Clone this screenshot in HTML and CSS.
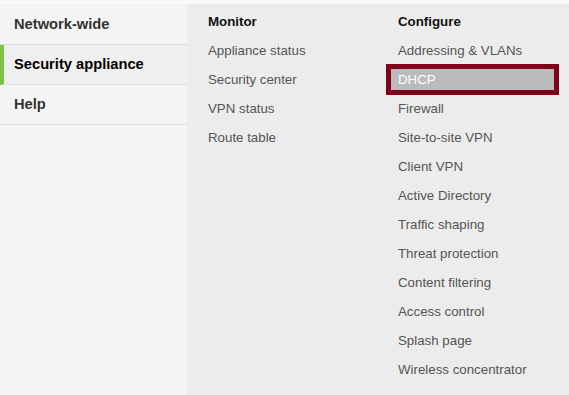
FILE: index.html
```html
<!DOCTYPE html>
<html lang="en">
<head>
    <meta charset="UTF-8">
    <title>Security appliance menu</title>
    <link rel="stylesheet" href="styles.css">
</head>
<body>
    <div class="menu">
        <ul class="sections">
            <li class="section">Network-wide</li>
            <li class="section active">Security appliance</li>
            <li class="section">Help</li>
        </ul>
        <div class="panel">
            <div class="column">
                <h3>Monitor</h3>
                <ul class="links">
                    <li>Appliance status</li>
                    <li>Security center</li>
                    <li>VPN status</li>
                    <li>Route table</li>
                </ul>
            </div>
            <div class="column">
                <h3>Configure</h3>
                <ul class="links">
                    <li>Addressing &amp; VLANs</li>
                    <li class="selected">DHCP</li>
                    <li>Firewall</li>
                    <li>Site-to-site VPN</li>
                    <li>Client VPN</li>
                    <li>Active Directory</li>
                    <li>Traffic shaping</li>
                    <li>Threat protection</li>
                    <li>Content filtering</li>
                    <li>Access control</li>
                    <li>Splash page</li>
                    <li>Wireless concentrator</li>
                </ul>
            </div>
        </div>
    </div>
</body>
</html>
```

FILE: styles.css
```css
body {
    margin: 0;
    font-family: "Liberation Sans", Arial, sans-serif;
    background: #fafafa;
    height: 395px;
    overflow: hidden;
}

.menu {
    display: flex;
    margin-top: 4px;
    margin-right: 1px;
    height: 391px;
}

.sections {
    list-style: none;
    margin: 0;
    padding: 0;
    width: 187px;
    flex-shrink: 0;
    background: #f4f4f4;
}

.section {
    height: 40px;
    line-height: 39px;
    padding-left: 14px;
    font-size: 14.7px;
    font-weight: bold;
    color: #333;
    border-bottom: 1px solid #dcdcdc;
    box-sizing: border-box;
}

.section:first-child {
    height: 41px;
    line-height: 40px;
}

.section.active {
    color: #000;
    background: #efefef;
    border-left: 4px solid #7dc242;
    padding-left: 10px;
}

.panel {
    flex: 1;
    display: flex;
    background: #ececec;
    padding: 9px 0 0 21px;
}

.column {
    width: 190px;
    flex-shrink: 0;
}

.column h3 {
    margin: 0;
    font-size: 13.3px;
    line-height: 18px;
    color: #111;
}

.links {
    list-style: none;
    margin: 5px 0 0;
    padding: 0;
}

.links li {
    height: 29px;
    line-height: 29px;
    font-size: 13.3px;
    color: #555;
}

.links li.selected {
    height: 21px;
    line-height: 21px;
    width: 156px;
    margin: -1px 0 -1px -12px;
    padding-left: 7px;
    border: 5px solid #80001a;
    background: #bbbbbb;
    color: #fff;
}
```
